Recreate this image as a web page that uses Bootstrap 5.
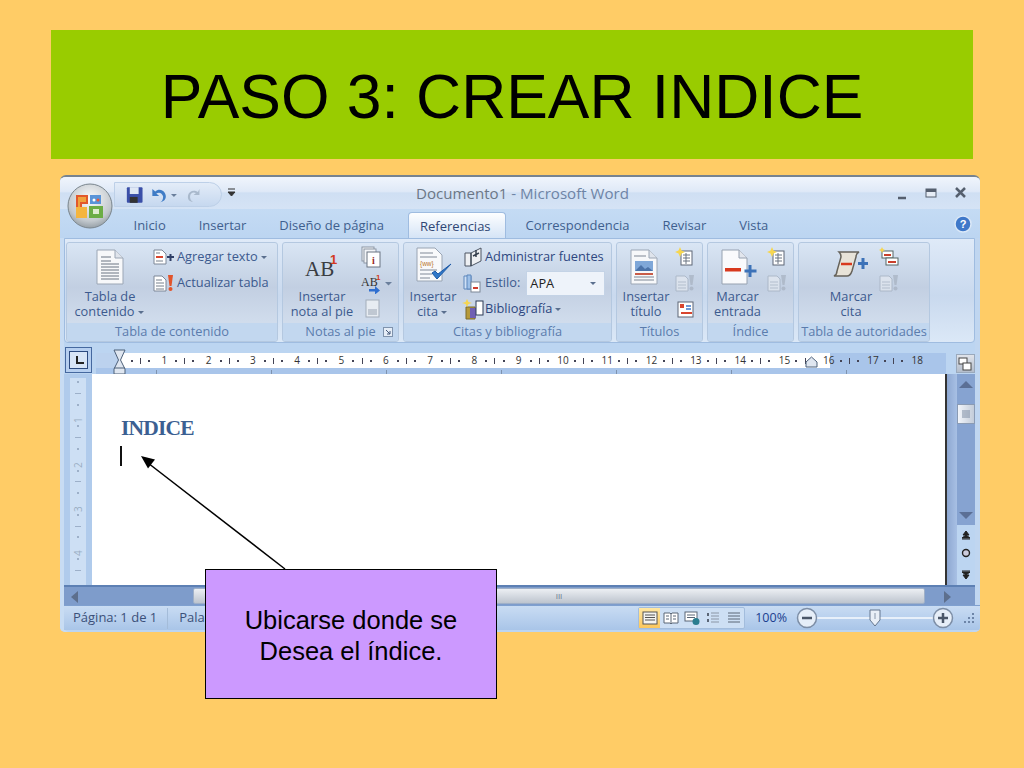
<!DOCTYPE html>
<html lang="es"><head><meta charset="utf-8"><title>PASO 3: CREAR INDICE</title>
<link href="https://cdn.jsdelivr.net/npm/bootstrap@5.3.0/dist/css/bootstrap.min.css" rel="stylesheet">
<style>
html,body{margin:0;height:768px;overflow:hidden;background:#FFCC66}
.sl{width:1024px;height:768px;padding-top:30px;font-family:"Liberation Sans",sans-serif;color:#000}
.sl-title{margin-left:51px;width:922px;height:129px;background:#99CC00;font-size:62.4px;line-height:134px;text-align:center;font-weight:400;margin-bottom:16px}
.wd{margin-left:60px;width:920px;height:457px;border-radius:6px 6px 5px 5px;background:#bcd5f1;border-top:2px solid #77838f;overflow:hidden;font-family:"Open Sans",sans-serif;font-size:12.8px;color:#3c5a8e;box-shadow:inset 4px 0 #c8dcf3,inset -5px 0 #c0d6f0}
.wd-tb{height:32px;background:linear-gradient(#f0f5fc,#dfe9f7 45%,#cfdff3 50%,#d5e3f5);position:relative}
.wd-qa{position:absolute;left:54px;top:5px;width:108px;height:25px;padding-left:4px;border-radius:0 13px 13px 0;background:linear-gradient(#e3ecf8,#c6d8ef);border:1px solid #bdd0e8}
.wd-orb{position:absolute;left:7px;top:6px;width:46px;height:46px;z-index:3}
.wd-ttl{font-size:15.1px;line-height:32px;color:#6e84a6;padding-left:356px}
.wd-ttl span{color:#6c7786}
.wd-ctl{position:absolute;left:836px;top:9px}
.wd-qc{position:absolute;left:167px;top:11px}
.wd-hp{margin-right:2px;margin-top:6px}
.wd-tabs{height:29px;padding-left:57px;padding-right:6px;background:linear-gradient(#c4dbf4,#bcd5f1);font-size:13px}
.wd-tab{padding:6px 16.500px 0;line-height:20px;color:#3f5f8e;white-space:nowrap}
.wd-tab.on{background:linear-gradient(#fdfeff,#d5e4f6);border:1px solid #9fbce0;border-bottom:0;border-radius:4px 4px 0 0;margin:3px 3.500px 0 7.500px;padding:3px 14px 0 11px;color:#2f4674}
.wd-rb{height:105px;margin:0 5px 0 4px;padding:3px 0 0 1px;gap:4px;background:linear-gradient(#dfeaf8,#c9d9ee 55%,#dbe8f7);border:1px solid #9fbce0;border-radius:0 0 4px 4px}
.rg{height:100px;border:1px solid #b4c8e0;border-radius:3px;background:linear-gradient(#d9e5f4,#c2cfe2 45%,#d0dcec 80%);overflow:hidden}
.rg-b{height:80px}
.rg-l{height:19px;line-height:17px;text-align:center;background:#c2d7ef;color:#5b7cad;position:relative;white-space:nowrap}
.rg-dl{position:absolute;right:5px;top:4px}
.rg-big{flex:none}
.rg-bi{height:46px;padding-bottom:4px}
.rg-bt{line-height:15px;text-align:center;white-space:nowrap}
.rg-sc{padding-top:1px;flex:none}
.rg-r{height:26px;white-space:nowrap}
.sm-i{margin-right:2px}
.sm-j{margin-right:1px}
.sm-k{margin-right:3px}
.cl-dk{color:#2e4780}
.cv{display:inline-block;border:3px solid transparent;border-top-color:#5a6f8e;border-bottom:0;margin:0 2px 0 3px;vertical-align:2px}
.cv-lg{border-width:3.500px 3.500px 0}
.wd-sel{width:79px;height:25px;background:#eef3fa;border:1px solid #c4d3e6;margin-left:6px;padding-left:3px;line-height:23px;color:#222}
.ic-r{margin-right:4px}
.ic-l{margin-left:2px}
.wd-rl{height:30px;margin:1px 5px 0 4px;background:#bcd5f1}
.rl-cor{width:27px;height:26px;margin:3px 0 0 1px;background:#b6cff0;border:1px solid #45689f;padding:3px}
.rl-cor span{display:block;width:100%;height:100%;border:1px solid #2b4a80;background:#d7e5f7;position:relative}
.rl-cor span:after{content:"";position:absolute;left:6px;top:4px;width:8px;height:8px;border-left:2px solid #222;border-bottom:2px solid #222}
.rl-h{position:relative;margin-left:4px;width:850px;height:21px;margin-top:9px;background:#a9c5ea;background-image:repeating-linear-gradient(90deg,transparent 0 60px,#7e93ae 60px 61px,transparent 61px 115px);background-size:100% 4px;background-position:0 100%;background-repeat:no-repeat}
.rl-tr{height:15px;padding-left:31px;font-size:10px;line-height:15px;color:#333;background:linear-gradient(90deg,#bcd2ee 24px,#fff 24px 734px,#a9c5ea 734px)}
.rc{width:44.3px;flex:none;padding-left:4px}
.rc i{display:block;flex:none}
.dt{width:2px;height:2px;background:#445}
.tk{width:1px;height:6px;background:#445}
.rc b{width:14px;flex:none;font-weight:400;text-align:center}
.rl-mk{position:absolute;left:17px;top:-4px}
.rl-mr{position:absolute;left:709px;top:3px}
.wd-vw{width:19px;height:19px;margin:10px 0 0 10px;background:linear-gradient(#dfe3ea,#b4bdcb);border:1px solid #9aa9bc}
.wd-dc{height:211px;margin:0 5px 0 4px}
.vr{width:28px;background:#8fb0e0;flex:none;padding:4px 6px 0}
.vr-t{width:16px;height:100%;background:#fff;padding-top:3px;font-size:10px;color:#333}
.vc{height:44.3px;width:16px;flex:none}
.vc-e{height:26px;gap:10px}
.vc i{display:block;flex:none}
.vc .dt{margin-left:7px}
.vc .tk2{width:6px;height:1px;background:#445;margin-left:5px}
.vc b{font-weight:400;height:10px;line-height:16px;writing-mode:vertical-rl;transform:rotate(180deg);text-align:center;width:16px}
.pg{flex:1;background:#fff;border-right:2px solid #333;position:relative;padding:42px 0 0 29px}
.pg h1{font-family:"Liberation Serif",serif;font-weight:700;font-size:21.500px;letter-spacing:-.8px;line-height:24px;color:#3b5f92;margin:0}
.pg-c{width:2px;height:20px;background:#111;margin-top:6px;margin-left:-1px}
.vs{width:28px;flex:none;background:linear-gradient(90deg,#8ea8d2,#a8c0e4 10px,#bcd5f1 10px)}
.vs-tk{height:151px;margin-left:10px;width:18px;background:#86a3d1;padding-top:7px}
.vs-th{width:18px;height:20px;margin:16px 0 0 0;background:linear-gradient(90deg,#f2f5fa,#c3ccd9);border:1px solid #8a9bb4}
.vs-a{margin-left:12px}
.vs-tk .vs-a{margin-left:2px;display:block}
.vs-d{margin-top:88px}
.vs-b1{margin-top:6px}
.vs-b2{margin-top:8px}
.vs-b3{margin-top:12px}
.hs{height:20px;margin:0 5px 0 4px;background:#7e9ccb;border-top:2px solid #5d80b4;position:relative}
.hs-al{position:absolute;left:7px;top:4px}
.hs-ar{position:absolute;left:880px;top:4px}
.hs-th{position:absolute;left:129px;top:1px;width:732px;height:16px;background:linear-gradient(#eceff3,#bdc4ce);border:1px solid #9fb0c8;border-radius:2px;text-align:center;font-size:8px;line-height:14px;color:#66758c}
.sb{height:25px;margin:0 0 0 4px;padding-right:4px;background:linear-gradient(#c9dcf3,#a9c5e8);border-top:1px solid #7fa0cf;font-size:13px;color:#3b5079;white-space:nowrap}
.sb-st{margin-left:9px}
.sb-sp{width:1px;height:21px;background:#a4bcd9;margin:0 11px 0 10px}
.sb-vb{height:22px;margin-left:auto;background:#cddff4;border:1px solid #a3bddd;border-radius:2px}
.sb-vi{width:21px;height:20px}
.sb-vi.on{background:linear-gradient(#ffe7a2,#fbc75c)}
.sb-z{color:#1c3f8f;font-size:12.500px;margin:0 9px 0 10px}
.sb-sl{width:128px;height:2px;background:#e8f0fa;position:relative;margin:0 -7px;flex:none}
.sb-sl svg{position:absolute;left:58px;top:-8px}
.co{position:absolute;left:205px;top:569px;width:292px;height:130px;background:#CC99FF;border:1px solid #000;font-family:"Liberation Sans",sans-serif;font-size:25.500px;line-height:31px;text-align:center;padding-top:35px;color:#000}
.ar{position:absolute;left:130px;top:445px}
.gw1{width:212px}.gw2{width:117px}.gw3{width:209px}.gw4{width:87px}.gw6{width:132px}
.cw1{width:86px}.cw2{width:78px}.cw3{width:58px}.cw5{width:59px}.cw6{width:56px}
.pl6{padding-left:24px}
</style></head>
<body>
<div class="sl position-relative">
<div class="sl-title">PASO 3: CREAR INDICE</div>
<div class="wd">
  <div class="wd-tb">
    <div class="wd-qa d-flex align-items-center">
      <svg width="104" height="22" viewBox="0 0 104 22"><rect x="8" y="3" width="16" height="16" rx="1" fill="#3a4fa8"/><rect x="11" y="3" width="9" height="7" fill="#dfe8f5"/><rect x="11" y="13" width="8" height="6" fill="#333"/><path d="M34 5v7h7l-3-2.500c3-2 6-.5 7 3 0 3-1 5-3 6 5-1 7-5 5-9-2-4-7-5-10-2z" fill="#3f7cc6"/><path d="M53 10h6l-3 3z" fill="#6a7f9c"/><path d="M82 4v6h-6l2.500-2c-3-1.500-5.500 0-6 3-.3 3 1 5 3 6-4 0-6-3-5-7 1-4 6-6 10-3z" fill="#a9b9cc" transform="translate(0 1)"/></svg>
    </div>
    <svg class="wd-qc" width="10" height="10" viewBox="0 0 10 10"><path d="M1 1h7M1 4h7l-3.500 4z" fill="#333" stroke="#333"/></svg>
    <svg class="wd-orb" viewBox="0 0 46 46"><defs><radialGradient id="og" cx=".5" cy=".35" r=".7"><stop offset="0" stop-color="#fbfcfd"/><stop offset=".7" stop-color="#c3c9ce"/><stop offset="1" stop-color="#8a949b"/></radialGradient></defs><circle cx="23" cy="23" r="22" fill="url(#og)" stroke="#7a858d"/><path d="M9 12h12v9h-6v9h-6z" fill="#e2582b"/><path d="M11 14h8v5h-6v9h-2z" fill="#f0a23c"/><path d="M23 12h11v9H23z" fill="#5a94d8"/><path d="M9 24h11v11H9z" fill="#f5b53e"/><path d="M22 23h14v12H22z" fill="#6cad45"/><path d="M26 26h6v5h-6z" fill="#dfeccf"/><circle cx="27" cy="17" r="1.500" fill="#fff"/><circle cx="31" cy="17" r="1.500" fill="#e8583b"/></svg>
    <div class="wd-ttl"><span>Documento1</span> - Microsoft Word</div>
    <svg class="wd-ctl" width="76" height="16" viewBox="0 0 76 16"><path d="M2 12h8" stroke="#555f6e" stroke-width="2.500"/><rect x="30" y="3" width="10" height="8" fill="#e6edf6" stroke="#555f6e"/><rect x="30" y="3" width="10" height="3" fill="#555f6e"/><path d="M60 2l9 9M69 2l-9 9" stroke="#555f6e" stroke-width="2.500"/></svg>
  </div>
  <div class="wd-tabs d-flex position-relative">
    <div class="wd-tab">Inicio</div><div class="wd-tab">Insertar</div><div class="wd-tab">Diseño de página</div>
    <div class="wd-tab on">Referencias</div>
    <div class="wd-tab">Correspondencia</div><div class="wd-tab">Revisar</div><div class="wd-tab">Vista</div>
    <svg class="ms-auto wd-hp" width="18" height="18" viewBox="0 0 18 18"><circle cx="9" cy="9" r="8" fill="#3f78c9" stroke="#dbe8f7" stroke-width="1.500"/><text x="9" y="13" text-anchor="middle" font-size="11" font-weight="700" fill="#fff" font-family="Liberation Sans">?</text></svg>
  </div>
  <div class="wd-rb d-flex">
    <div class="rg gw1"><div class="rg-b d-flex">
      <div class="rg-big cw1"><div class="rg-bi d-flex align-items-end justify-content-center"><svg width="28" height="36" viewBox="0 0 28 36"><path d="M1 1h18l8 8v26H1z" fill="#f7f8fa" stroke="#9ba6b5"/><path d="M19 1v8h8" fill="#dfe4ec" stroke="#9ba6b5"/><path d="M5 8h10M5 12h10M5 15h18M5 18h18M5 21h18M5 24h18M5 27h18M5 30h18" stroke="#6b7482"/></svg></div><div class="rg-bt">Tabla de<br>contenido<span class="cv"></span></div></div>
      <div class="rg-sc">
        <div class="rg-r d-flex align-items-center"><svg width="22" height="16" class="sm-i" viewBox="0 0 22 16"><path d="M1 1h8l4 4v10H1z" fill="#fff" stroke="#7d8797"/><path d="M3 8h7" stroke="#d8452e" stroke-width="2"/><path d="M3 4h4M3 12h7" stroke="#77808c"/><path d="M14 8h7M17.500 5v7" stroke="#2e3e66" stroke-width="2"/></svg><span>Agregar texto</span><span class="cv"></span></div>
        <div class="rg-r d-flex align-items-center"><svg width="22" height="18" class="sm-i" viewBox="0 0 22 18"><path d="M1 2h8l4 4v11H1z" fill="#fff" stroke="#7d8797"/><path d="M3 6h6M3 9h8M3 12h8M3 15h8" stroke="#77808c"/><path d="M15 1h5l-1.500 11h-2z" fill="#e2542b"/><circle cx="17.500" cy="15" r="2" fill="#e2542b"/></svg><span>Actualizar tabla</span></div>
      </div></div><div class="rg-l">Tabla de contenido</div></div>
    <div class="rg gw2"><div class="rg-b d-flex">
      <div class="rg-big cw2"><div class="rg-bi d-flex align-items-center justify-content-center"><svg width="40" height="30" viewBox="0 0 40 30"><text x="3" y="27" font-family="Liberation Serif" font-size="21" fill="#3a3d42">AB</text><text x="28" y="15" font-family="Liberation Sans" font-weight="700" font-size="13" fill="#d33a22">1</text></svg></div><div class="rg-bt">Insertar<br>nota al pie</div></div>
      <div class="rg-sc">
        <div class="rg-r d-flex align-items-center"><svg width="20" height="22" viewBox="0 0 20 22"><rect x="1" y="1" width="12" height="14" fill="#f2f4f7" stroke="#8c96a4"/><rect x="3" y="3" width="12" height="14" fill="#f2f4f7" stroke="#8c96a4"/><rect x="6" y="6" width="13" height="15" fill="#fff" stroke="#6b7482"/><text x="12.500" y="18" text-anchor="middle" font-size="10" font-weight="700" font-family="Liberation Serif" fill="#9a2a1e">i</text></svg></div>
        <div class="rg-r d-flex align-items-center"><svg width="32" height="22" viewBox="0 0 32 22"><text x="0" y="14" font-family="Liberation Serif" font-size="12" fill="#333">AB</text><text x="15" y="8" font-size="8" font-weight="700" fill="#d33a22" font-family="Liberation Sans">1</text><path d="M8 17h6v-3l5 4.500-5 4v-3H8z" fill="#2f6fd0"/><path d="M24 10h7l-3.500 3.500z" fill="#6a7f9c"/></svg></div>
        <div class="rg-r d-flex align-items-center"><svg width="18" height="20" viewBox="0 0 18 20" class="ms-1"><rect x="1" y="1" width="13" height="17" fill="#e7ecf2" stroke="#a3adba"/><path d="M3 11h9M3 13h9M3 15h9" stroke="#98a3b2"/></svg></div>
      </div></div><div class="rg-l">Notas al pie<svg class="rg-dl" width="10" height="10" viewBox="0 0 10 10"><rect x=".5" y=".5" width="9" height="9" fill="#e5edf7" stroke="#7f93ad"/><path d="M3 3l4 4M7 4v3H4" stroke="#45597a" fill="none"/></svg></div></div>
    <div class="rg gw3"><div class="rg-b d-flex">
      <div class="rg-big cw3"><div class="rg-bi d-flex align-items-end justify-content-center"><svg width="40" height="38" viewBox="0 0 40 38" class="ic-l"><path d="M3 1h18l7 7v26H3z" fill="#f8f9fb" stroke="#99a4b3"/><path d="M6 6h13M6 10h17M6 23h17M6 27h12M6 31h10" stroke="#808997"/><text x="6" y="19" font-size="6.500" fill="#b9752a" font-family="Liberation Sans">{ww}</text><path d="M18 26l5 6L37 17l-13 10-3-3z" fill="#2f78c9" stroke="#1e5aa6"/></svg></div><div class="rg-bt">Insertar<br>cita<span class="cv"></span></div></div>
      <div class="rg-sc">
        <div class="rg-r d-flex align-items-center"><svg width="22" height="20" class="sm-j" viewBox="0 0 22 20"><path d="M3 6h6l10-5v13l-10 5H3z" fill="#eef0f3" stroke="#4c5563"/><path d="M9 6v13M11 9l6-3M14 3v7" stroke="#36404f" stroke-width="1.500"/></svg><span class="cl-dk">Administrar fuentes</span></div>
        <div class="rg-r d-flex align-items-center"><svg width="20" height="20" class="sm-k" viewBox="0 0 20 20"><path d="M2 3h7v13H2z" fill="#cfe0f5" stroke="#5c86bb"/><path d="M5 2h4v14H5z" fill="#9dc0e8" stroke="#5c86bb"/><rect x="9" y="9" width="9" height="10" fill="#fff" stroke="#7c8796"/><path d="M11 15h5" stroke="#cf3d2e" stroke-width="2"/></svg><span>Estilo:</span><div class="wd-sel d-flex align-items-center justify-content-between">APA<span class="cv cv-lg me-2"></span></div></div>
        <div class="rg-r d-flex align-items-center"><svg width="22" height="22" class="sm-j" viewBox="0 0 22 22"><path d="M4 9h9v12H4z" fill="#b79a3a" stroke="#7b6a2c"/><path d="M8 10h6v10H8z" fill="#6f5fb3"/><rect x="14" y="3" width="7" height="14" fill="#fff" stroke="#2c3b57"/><path d="M5 1l1.500 3L10 5 6.500 6 5 9 3.500 6 0 5l3.500-1z" fill="#f6d650"/></svg><span class="cl-dk">Bibliografía</span><span class="cv"></span></div>
      </div></div><div class="rg-l">Citas y bibliografía</div></div>
    <div class="rg gw4"><div class="rg-b d-flex">
      <div class="rg-big cw3"><div class="rg-bi d-flex align-items-end justify-content-center"><svg width="28" height="36" viewBox="0 0 28 36" class="ic-r"><path d="M1 1h18l8 8v26H1z" fill="#f7f8fa" stroke="#9ba6b5"/><path d="M19 1v8h8" fill="#dfe4ec" stroke="#9ba6b5"/><path d="M4 7h12M4 28h20M4 31h20" stroke="#7e8795"/><rect x="5" y="12" width="18" height="10" fill="#7fa7d8"/><path d="M5 22l6-6 4 4 3-2 5 4z" fill="#4b72a8"/><rect x="5" y="24" width="18" height="2" fill="#c95c48"/></svg></div><div class="rg-bt">Insertar<br>título</div></div>
      <div class="rg-sc">
        <div class="rg-r d-flex align-items-center"><svg width="20" height="20" viewBox="0 0 20 20"><rect x="6" y="4" width="11" height="14" fill="#fff" stroke="#5e6776"/><path d="M8 8h7M8 11h7M8 14h7M11 6v11" stroke="#6b7482"/><path d="M5 0l1.500 3.500L10 5 6.500 6.500 5 10 3.500 6.500 0 5l3.500-1.500z" fill="#f6d650"/></svg></div>
        <div class="rg-r d-flex align-items-center"><svg width="20" height="18" viewBox="0 0 20 18" opacity=".55"><path d="M1 2h9l3 3v12H1z" fill="#eef1f5" stroke="#98a3b2"/><path d="M3 8h8M3 11h8M3 14h8" stroke="#a6afbb"/><path d="M14 1h5l-1.500 10h-2z" fill="#9ea8b6"/><circle cx="16.500" cy="14.500" r="2" fill="#9ea8b6"/></svg></div>
        <div class="rg-r d-flex align-items-center"><svg width="20" height="20" viewBox="0 0 20 20"><rect x="3" y="3" width="15" height="15" fill="#fff" stroke="#5e6776"/><path d="M5 5h4v4H5z" fill="#d8452e"/><path d="M6 14h11" stroke="#d8452e" stroke-width="2"/><path d="M11 7h5M11 10h5" stroke="#3f78c9" stroke-width="1.500"/></svg></div>
      </div></div><div class="rg-l">Títulos</div></div>
    <div class="rg gw4"><div class="rg-b d-flex">
      <div class="rg-big cw5"><div class="rg-bi d-flex align-items-end justify-content-center"><svg width="40" height="36" viewBox="0 0 40 36"><path d="M4 1h17l8 8v26H4z" fill="#f9fafc" stroke="#96a1b0"/><path d="M21 1v8h8" fill="#e2e6ed" stroke="#96a1b0"/><rect x="7" y="19" width="16" height="3.500" fill="#d8391e"/><path d="M32 16v12M26.500 22h12" stroke="#3c72b8" stroke-width="3"/></svg></div><div class="rg-bt">Marcar<br>entrada</div></div>
      <div class="rg-sc">
        <div class="rg-r d-flex align-items-center"><svg width="20" height="20" viewBox="0 0 20 20"><rect x="6" y="4" width="11" height="14" fill="#fff" stroke="#5e6776"/><path d="M8 8h7M8 11h7M8 14h7M11 6v11" stroke="#6b7482"/><path d="M5 0l1.500 3.500L10 5 6.500 6.500 5 10 3.500 6.500 0 5l3.500-1.500z" fill="#f6d650"/></svg></div>
        <div class="rg-r d-flex align-items-center"><svg width="20" height="18" viewBox="0 0 20 18" opacity=".55"><path d="M1 2h9l3 3v12H1z" fill="#eef1f5" stroke="#98a3b2"/><path d="M3 8h8M3 11h8M3 14h8" stroke="#a6afbb"/><path d="M14 1h5l-1.500 10h-2z" fill="#9ea8b6"/><circle cx="16.500" cy="14.500" r="2" fill="#9ea8b6"/></svg></div>
      </div></div><div class="rg-l">Índice</div></div>
    <div class="rg gw6"><div class="rg-b d-flex pl6">
      <div class="rg-big cw6"><div class="rg-bi d-flex align-items-center justify-content-center"><svg width="36" height="26" viewBox="0 0 36 26"><path d="M6 1h20c-2 1-3 3-3 5l-4 14c-1 3-3 5-5 5H1c2-1 3-3 3-5L8 6c0-2-1-4-2-5z" fill="#e8e3d8" stroke="#66625a" stroke-width="1.500"/><path d="M8 13h11" stroke="#d8391e" stroke-width="2.500"/><path d="M30 7v11M25 12.500h10" stroke="#3c72b8" stroke-width="3"/></svg></div><div class="rg-bt">Marcar<br>cita</div></div>
      <div class="rg-sc">
        <div class="rg-r d-flex align-items-center"><svg width="20" height="20" viewBox="0 0 20 20"><rect x="3" y="4" width="11" height="7" fill="#fff" stroke="#566"/><rect x="7" y="11" width="12" height="7" fill="#fff" stroke="#566"/><path d="M5 8h7" stroke="#c9402c" stroke-width="2"/><path d="M9 15h8" stroke="#c9402c" stroke-width="2"/><path d="M3 0l1 2 2 1-2 1-1 2-1-2-2-1 2-1z" fill="#f6d650"/></svg></div>
        <div class="rg-r d-flex align-items-center"><svg width="20" height="18" viewBox="0 0 20 18" opacity=".55"><path d="M1 2h9l3 3v12H1z" fill="#eef1f5" stroke="#98a3b2"/><path d="M3 8h8M3 11h8M3 14h8" stroke="#a6afbb"/><path d="M14 1h5l-1.500 10h-2z" fill="#9ea8b6"/><circle cx="16.500" cy="14.500" r="2" fill="#9ea8b6"/></svg></div>
      </div></div><div class="rg-l">Tabla de autoridades</div></div>
  </div>
  <div class="wd-rl d-flex">
    <div class="rl-cor"><span></span></div>
    <div class="rl-h"><div class="rl-tr d-flex">
      <div class="rc d-flex align-items-center justify-content-between"><i class="dt"></i><i class="tk"></i><i class="dt"></i><b>1</b></div>
      <div class="rc d-flex align-items-center justify-content-between"><i class="dt"></i><i class="tk"></i><i class="dt"></i><b>2</b></div>
      <div class="rc d-flex align-items-center justify-content-between"><i class="dt"></i><i class="tk"></i><i class="dt"></i><b>3</b></div>
      <div class="rc d-flex align-items-center justify-content-between"><i class="dt"></i><i class="tk"></i><i class="dt"></i><b>4</b></div>
      <div class="rc d-flex align-items-center justify-content-between"><i class="dt"></i><i class="tk"></i><i class="dt"></i><b>5</b></div>
      <div class="rc d-flex align-items-center justify-content-between"><i class="dt"></i><i class="tk"></i><i class="dt"></i><b>6</b></div>
      <div class="rc d-flex align-items-center justify-content-between"><i class="dt"></i><i class="tk"></i><i class="dt"></i><b>7</b></div>
      <div class="rc d-flex align-items-center justify-content-between"><i class="dt"></i><i class="tk"></i><i class="dt"></i><b>8</b></div>
      <div class="rc d-flex align-items-center justify-content-between"><i class="dt"></i><i class="tk"></i><i class="dt"></i><b>9</b></div>
      <div class="rc d-flex align-items-center justify-content-between"><i class="dt"></i><i class="tk"></i><i class="dt"></i><b>10</b></div>
      <div class="rc d-flex align-items-center justify-content-between"><i class="dt"></i><i class="tk"></i><i class="dt"></i><b>11</b></div>
      <div class="rc d-flex align-items-center justify-content-between"><i class="dt"></i><i class="tk"></i><i class="dt"></i><b>12</b></div>
      <div class="rc d-flex align-items-center justify-content-between"><i class="dt"></i><i class="tk"></i><i class="dt"></i><b>13</b></div>
      <div class="rc d-flex align-items-center justify-content-between"><i class="dt"></i><i class="tk"></i><i class="dt"></i><b>14</b></div>
      <div class="rc d-flex align-items-center justify-content-between"><i class="dt"></i><i class="tk"></i><i class="dt"></i><b>15</b></div>
      <div class="rc d-flex align-items-center justify-content-between"><i class="dt"></i><i class="tk"></i><i class="dt"></i><b>16</b></div>
      <div class="rc d-flex align-items-center justify-content-between"><i class="dt"></i><i class="tk"></i><i class="dt"></i><b>17</b></div>
      <div class="rc d-flex align-items-center justify-content-between"><i class="dt"></i><i class="tk"></i><i class="dt"></i><b>18</b></div>
    </div>
    <svg class="rl-mk" width="13" height="26" viewBox="0 0 13 26"><path d="M1 1h11L7.500 11 12 20v5H1v-5l4.500-9z" fill="#dfe6f0" stroke="#4d6079"/><path d="M1 19h11" stroke="#4d6079"/></svg>
    <svg class="rl-mr" width="13" height="12" viewBox="0 0 13 12"><path d="M6.500 1l5.500 5v5H1V6z" fill="#dfe6f0" stroke="#4d6079"/></svg>
    </div>
    <div class="wd-vw d-flex align-items-center justify-content-center"><svg width="15" height="14" viewBox="0 0 15 14"><rect x="1" y="1" width="8" height="6" fill="#fff" stroke="#444"/><rect x="5" y="6" width="8" height="7" fill="#fff" stroke="#444"/></svg></div>
  </div>
  <div class="wd-dc d-flex">
    <div class="vr"><div class="vr-t d-flex flex-column align-items-center">
      <div class="vc d-flex flex-column align-items-start justify-content-between"><i class="dt"></i><i class="tk2"></i><i class="dt"></i><b>1</b></div>
      <div class="vc d-flex flex-column align-items-start justify-content-between"><i class="dt"></i><i class="tk2"></i><i class="dt"></i><b>2</b></div>
      <div class="vc d-flex flex-column align-items-start justify-content-between"><i class="dt"></i><i class="tk2"></i><i class="dt"></i><b>3</b></div>
      <div class="vc d-flex flex-column align-items-start justify-content-between"><i class="dt"></i><i class="tk2"></i><i class="dt"></i><b>4</b></div>
      <div class="vc vc-e d-flex flex-column align-items-start"><i class="dt"></i><i class="tk2"></i></div>
    </div></div>
    <div class="pg"><h1>INDICE</h1><div class="pg-c"></div></div>
    <div class="vs d-flex flex-column">
      <div class="vs-tk">
        <svg class="vs-a" width="14" height="7" viewBox="0 0 14 7"><path d="M0 7L7 0l7 7z" fill="#5b6f95"/></svg>
        <div class="vs-th d-flex align-items-center justify-content-center"><svg width="10" height="8" viewBox="0 0 10 8"><path d="M1 1h8M1 3h8M1 5h8M1 7h8" stroke="#7e8da3"/></svg></div>
        <svg class="vs-a vs-d" width="14" height="7" viewBox="0 0 14 7"><path d="M0 0l7 7 7-7z" fill="#5b6f95"/></svg>
      </div>
      <svg class="vs-a vs-b1" width="14" height="9" viewBox="0 0 14 9"><path d="M3 8h8M7 0l3 4H4zM7 4l4 3H3z" fill="#222" stroke="#222"/></svg>
      <svg class="vs-a vs-b2" width="14" height="10" viewBox="0 0 14 10"><circle cx="7" cy="5" r="3.500" fill="#ccd" stroke="#222" stroke-width="1.400"/></svg>
      <svg class="vs-a vs-b3" width="14" height="9" viewBox="0 0 14 9"><path d="M3 1h8M7 9L4 5h6zM7 5L3 2h8z" fill="#222" stroke="#222"/></svg>
    </div>
  </div>
  <div class="hs">
    <svg class="hs-al" width="7" height="12" viewBox="0 0 7 12"><path d="M7 0L0 6l7 6z" fill="#5d6f8d"/></svg>
    <div class="hs-th">III</div>
    <svg class="hs-ar" width="7" height="12" viewBox="0 0 7 12"><path d="M0 0l7 6-7 6z" fill="#5d6f8d"/></svg>
  </div>
  <div class="sb d-flex align-items-center">
    <span class="sb-st">Página: 1 de 1</span><span class="sb-sp"></span><span>Palabras: 1</span>
    <div class="sb-vb d-flex">
      <div class="sb-vi on d-flex align-items-center justify-content-center"><svg width="16" height="14" viewBox="0 0 16 14"><rect x="1" y="1" width="14" height="12" fill="#f4f4f0" stroke="#555"/><path d="M3 4h10M3 6.500h10M3 9h10" stroke="#555"/></svg></div>
      <div class="sb-vi d-flex align-items-center justify-content-center"><svg width="16" height="14" viewBox="0 0 16 14"><path d="M1 2h6l1 1 1-1h6v10H9l-1 1-1-1H1z" fill="#fff" stroke="#5b6676"/><path d="M3 5h3M3 8h3M10 5h3M10 8h3M8 3v9" stroke="#5b6676"/></svg></div>
      <div class="sb-vi d-flex align-items-center justify-content-center"><svg width="16" height="14" viewBox="0 0 16 14"><rect x="1" y="1" width="12" height="9" fill="#fff" stroke="#5b6676"/><path d="M3 4h8M3 6.500h8" stroke="#5b6676"/><circle cx="12" cy="10.500" r="3.500" fill="#2a7d8f"/></svg></div>
      <div class="sb-vi d-flex align-items-center justify-content-center"><svg width="16" height="14" viewBox="0 0 16 14"><path d="M6 2h8M6 5h8M6 8h8M6 11h8" stroke="#8b96a6"/><path d="M2 2h2v3H2zM2 8h2v3H2z" fill="#5b6676"/></svg></div>
      <div class="sb-vi d-flex align-items-center justify-content-center"><svg width="16" height="14" viewBox="0 0 16 14"><path d="M2 2h12M2 5h12M2 8h12M2 11h12" stroke="#5b6676"/></svg></div>
    </div>
    <span class="sb-z">100%</span>
    <svg width="22" height="22" viewBox="0 0 22 22" class="position-relative z-1"><circle cx="11" cy="11" r="9.500" fill="#e6eef8" stroke="#7d8ea6" stroke-width="1.500"/><path d="M6 11h10" stroke="#4a5668" stroke-width="2.500"/></svg>
    <div class="sb-sl"><svg width="12" height="18" viewBox="0 0 12 18"><path d="M1 1h10v10l-5 6-5-6z" fill="#e9eff7" stroke="#64778f"/><path d="M6 4v6" stroke="#8a98ab"/></svg></div>
    <svg width="22" height="22" viewBox="0 0 22 22" class="position-relative z-1"><circle cx="11" cy="11" r="9.500" fill="#e6eef8" stroke="#7d8ea6" stroke-width="1.500"/><path d="M6 11h10M11 6v10" stroke="#4a5668" stroke-width="2.500"/></svg>
    <svg width="14" height="14" viewBox="0 0 14 14" class="ms-2"><g fill="#6d85a8"><rect x="10" y="2" width="2" height="2"/><rect x="6" y="6" width="2" height="2"/><rect x="10" y="6" width="2" height="2"/><rect x="2" y="10" width="2" height="2"/><rect x="6" y="10" width="2" height="2"/><rect x="10" y="10" width="2" height="2"/></g></svg>
  </div>
</div>
<svg class="ar" width="160" height="126" viewBox="0 0 160 126"><path d="M155 124L18 18" stroke="#000" stroke-width="1.500"/><path d="M11 11l14 3.500-7 9z" fill="#000"/></svg>
<div class="co">Ubicarse donde se<br>Desea el índice.</div>
</div>
</body></html>
